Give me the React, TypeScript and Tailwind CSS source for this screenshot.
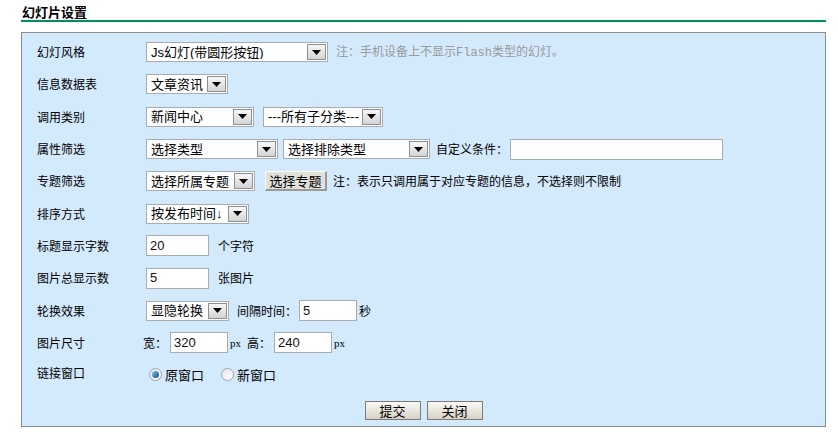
import type { ReactNode } from 'react';

const cjk = "font-['Noto_Sans_CJK_SC',sans-serif]";
const latin = "font-['Liberation_Sans','Noto_Sans_CJK_SC',sans-serif]";

function Select({ text, width }: { text: ReactNode; width: string }) {
  return (
    <div className={`${width} h-[20px] flex items-center bg-white border border-[#a5acb2] pl-[4px] pr-[1px] text-[13px] text-black ${latin}`}>
      <span className="flex-1 truncate leading-none">{text}</span>
      <span className="w-[19px] h-[16px] flex items-center justify-center border border-[#8e8f8f] bg-gradient-to-b from-[#f7f7f7] to-[#d4d4d4]">
        <svg width="9" height="5" viewBox="0 0 9 5">
          <path d="M0 0h9L4.5 5z" fill="#000" />
        </svg>
      </span>
    </div>
  );
}

function Input({ value, width }: { value?: string; width: string }) {
  return (
    <div className={`${width} h-[21px] flex items-center bg-white border border-[#a5acb2] px-[3px] text-[13px] text-[#111] ${latin}`}>
      {value}
    </div>
  );
}

function Radio({ checked, label }: { checked?: boolean; label: string }) {
  return (
    <label className="flex items-center gap-[3px] text-[13px]">
      <span className="w-[13px] h-[13px] rounded-full border border-[#a0a6ab] bg-gradient-to-br from-[#e6e6e6] to-white flex items-center justify-center">
        {checked && <span className="w-[7px] h-[7px] rounded-full bg-gradient-to-br from-[#7fc2ea] to-[#0a4f8a]" />}
      </span>
      {label}
    </label>
  );
}

function Row({ label, children }: { label: string; children: ReactNode }) {
  return (
    <div className="h-[32.3px] flex items-center">
      <div className="w-[109px] shrink-0 text-[12px] text-black">{label}</div>
      <div className="flex items-center">{children}</div>
    </div>
  );
}

function XpButton({ children }: { children: ReactNode }) {
  return (
    <button className="w-[56px] h-[19px] flex items-center justify-center border border-[#7a7a7a] bg-gradient-to-b from-[#fbfaf6] to-[#d6d2c6] text-[13px] text-black leading-none">
      {children}
    </button>
  );
}

export default function App() {
  return (
    <div className={`w-[838px] h-[432px] bg-white pl-[21px] pr-[12px] pt-[5px] ${cjk}`}>
      <div className="h-[17px] border-b-2 border-[#00905a] pl-[1px] text-[13px] font-bold text-black leading-[13px]">
        幻灯片设置
      </div>

      <div className="mt-[10px] h-[395px] border border-[#8c8c8c] bg-[#d3e9fc] pl-[15px] pt-[3px]">
        <Row label="幻灯风格">
          <Select text="Js幻灯(带圆形按钮)" width="w-[182px]" />
          <span className="ml-[8px] text-[12px] text-[#9a9a9a]">
            注：手机设备上不显示<span className="font-['Liberation_Mono',monospace]">Flash</span>类型的幻灯。
          </span>
        </Row>
        <Row label="信息数据表">
          <Select text="文章资讯" width="w-[82px]" />
        </Row>
        <Row label="调用类别">
          <Select text="新闻中心" width="w-[108px]" />
          <div className="ml-[9px]">
            <Select text="---所有子分类---" width="w-[120px]" />
          </div>
        </Row>
        <Row label="属性筛选">
          <Select text="选择类型" width="w-[132px]" />
          <div className="ml-[5px]">
            <Select text="选择排除类型" width="w-[147px]" />
          </div>
          <span className="ml-[6px] text-[12px] text-black">自定义条件：</span>
          <div className="ml-[2px]">
            <Input width="w-[213px]" />
          </div>
        </Row>
        <Row label="专题筛选">
          <Select text="选择所属专题" width="w-[109px]" />
          <button className="ml-[10px] w-[62px] h-[20px] flex items-center justify-center bg-[#e1e1dc] border-t border-l border-white border-r-2 border-b-2 border-r-[#9a9a9a] border-b-[#9a9a9a] text-[13px] text-black leading-none">
            选择专题
          </button>
          <span className="ml-[6px] text-[12px] text-black">注：表示只调用属于对应专题的信息，不选择则不限制</span>
        </Row>
        <Row label="排序方式">
          <Select text="按发布时间↓" width="w-[103px]" />
        </Row>
        <Row label="标题显示字数">
          <Input value="20" width="w-[63px]" />
          <span className="ml-[9px] text-[12px]">个字符</span>
        </Row>
        <Row label="图片总显示数">
          <Input value="5" width="w-[63px]" />
          <span className="ml-[9px] text-[12px]">张图片</span>
        </Row>
        <Row label="轮换效果">
          <Select text="显隐轮换" width="w-[83px]" />
          <span className="ml-[8px] text-[12px]">间隔时间：</span>
          <div className="ml-[2px]">
            <Input value="5" width="w-[58px]" />
          </div>
          <span className="ml-[2px] text-[12px]">秒</span>
        </Row>
        <Row label="图片尺寸">
          <span className="-ml-[3px] mr-[3px] text-[12px]">宽：</span>
          <Input value="320" width="w-[58px]" />
          <span className="ml-[2px] text-[11px] font-['Liberation_Serif',serif]">px</span>
          <span className="ml-[6px] mr-[3px] text-[12px]">高：</span>
          <Input value="240" width="w-[58px]" />
          <span className="ml-[2px] text-[11px] font-['Liberation_Serif',serif]">px</span>
        </Row>
        <div className="-mt-[2px]">
          <Row label="链接窗口">
            <div className="ml-[3px] flex items-center gap-[17px] pt-[3px]">
              <Radio checked label="原窗口" />
              <Radio label="新窗口" />
            </div>
          </Row>
        </div>
        <div className="mt-[12px] flex justify-center gap-[6px] pr-[15px]">
          <XpButton>提交</XpButton>
          <XpButton>关闭</XpButton>
        </div>
      </div>
    </div>
  );
}
